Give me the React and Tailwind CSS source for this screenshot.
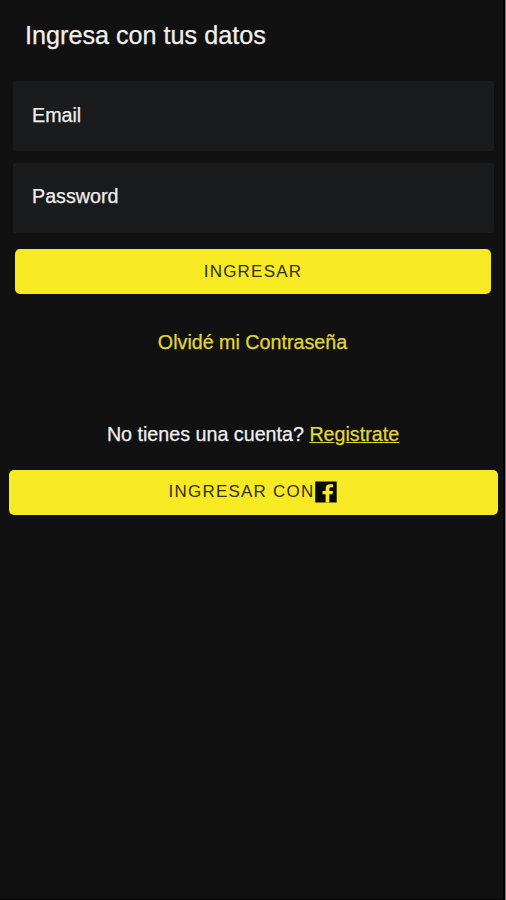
export default function App() {
  return (
    <main className="flex h-[900px] w-[506px] flex-col border-r border-r-[#777777] bg-[#111111] font-['Liberation_Sans',Arial,sans-serif] text-[19.7px] leading-6 text-[#f0f0f0] shadow-[inset_-2px_-1px_0_#050505]">
      <h1 className="mt-5 ml-[25px] text-[25.2px] leading-[30px] [-webkit-text-stroke:0.25px]">Ingresa con tus datos</h1>
      <form className="mt-[31px] flex flex-col">
        <div className="mr-[11px] ml-[13px] h-[70px] rounded-[2px] bg-[#1a1b1d] px-[19px] pt-[22px] [-webkit-text-stroke:0.25px]">Email</div>
        <div className="mt-3 mr-[11px] ml-[13px] h-[70px] rounded-[2px] bg-[#1a1b1d] px-[19px] pt-[21px] [-webkit-text-stroke:0.25px]">Password</div>
        <button type="button" className="mt-4 mr-[14px] ml-[15px] h-[45px] rounded-[5px] bg-[#f7ea22] text-[17px] tracking-[1.2px] text-[#33300a]">INGRESAR</button>
      </form>
      <a className="mt-9 text-center text-[#e3d831] [-webkit-text-stroke:0.25px]">Olvidé mi Contraseña</a>
      <p className="mt-[68px] pl-px text-center [-webkit-text-stroke:0.25px]">No tienes una cuenta? <a className="text-[#e3d831] underline">Registrate</a></p>
      <button type="button" className="mt-6 mr-[7px] ml-[9px] flex h-[45px] items-center justify-center rounded-[5px] bg-[#f7ea22] pr-[2px] pb-[2px] text-[17px] tracking-[1.23px] text-[#33300a]">
        INGRESAR CON
        <svg viewBox="0 0 22 22" className="size-[22px]">
          <rect width="21.5" height="21" x=".2" y=".4" rx=".5" fill="#080806" />
          <path d="M10.6 21.4V13.2H7.5V10h3.1V7.7c0-2.9 1.6-4.4 4.5-4.4h3v3h-2c-1.3 0-1.8.6-1.8 1.8V10h3.7l-.5 3.2h-3.2v8.2Z" fill="#f7ea22" />
        </svg>
      </button>
    </main>
  );
}
